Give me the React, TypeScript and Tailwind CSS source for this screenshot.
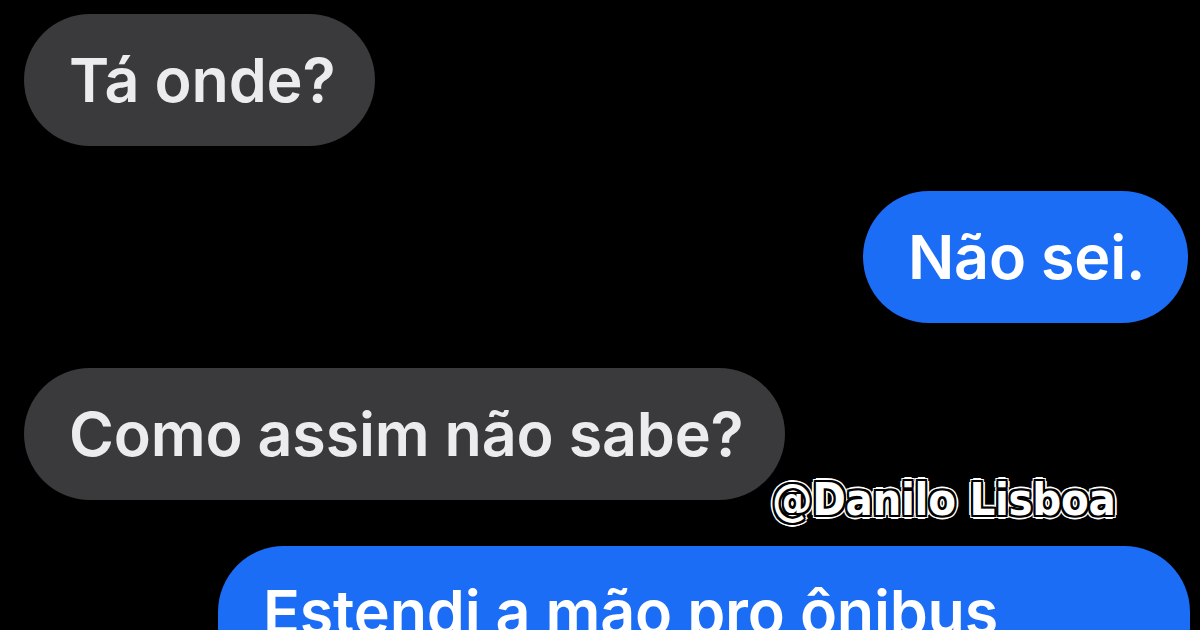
import React from "react";

function Bubble({ text, side, w }: { text: string; side: "l" | "r"; w: string }) {
  const base =
    side === "l"
      ? "bg-[#3a3a3c] text-[#ececee] self-start"
      : "bg-[#1c6df6] text-white self-end";
  return (
    <div className={`${base} ${w} h-[132px] shrink-0 rounded-[66px] flex items-center px-[45px]`}>
      <span className="text-[61px] leading-none font-semibold tracking-[-0.2px] whitespace-nowrap">{text}</span>
    </div>
  );
}

export default function App() {
  return (
    <div
      className="relative w-[1200px] h-[630px] bg-black overflow-hidden flex flex-col pt-[14px] pl-[24px] pr-[12px] gap-[45px]"
      style={{ fontFamily: "Inter, 'Noto Sans', sans-serif" }}
    >
      <Bubble text="Tá onde?" side="l" w="w-[351px]" />
      <Bubble text="Não sei." side="r" w="w-[325px]" />
      <Bubble text="Como assim não sabe?" side="l" w="w-[761px]" />
      <div className="self-end w-[972px] h-[132px] shrink-0 mr-[-2px] mt-[1px] bg-[#1c6df6] rounded-t-[66px] px-[45px] pt-[36px] text-white">
        <span className="text-[61px] leading-none font-semibold tracking-[-0.2px] whitespace-nowrap">Estendi a mão pro ônibus</span>
      </div>
      <div
        className="absolute left-[772px] top-[477px] text-[45px] font-bold text-white leading-none tracking-[-0.3px] [text-shadow:1px_0_0_#000,-1px_0_0_#000,0_1px_0_#000,0_-1px_0_#000,2px_0_0_#000,-2px_0_0_#000,0_2px_0_#000,0_-2px_0_#000,2px_2px_0_#000,-2px_-2px_0_#000,2px_-2px_0_#000,-2px_2px_0_#000,4px_0_0_#fff,-4px_0_0_#fff,0_4px_0_#fff,0_-4px_0_#fff,3px_3px_0_#fff,-3px_-3px_0_#fff,3px_-3px_0_#fff,-3px_3px_0_#fff]"
        style={{ fontFamily: "'DejaVu Sans Condensed', 'Liberation Sans Narrow', sans-serif" }}
      >
        @Danilo Lisboa
      </div>
    </div>
  );
}
